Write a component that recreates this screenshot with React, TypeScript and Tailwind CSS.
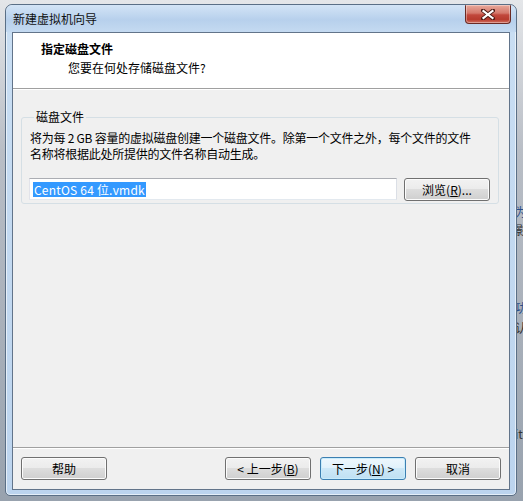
import React from "react";

function Btn({
  children,
  primary,
}: {
  children: React.ReactNode;
  primary?: boolean;
}) {
  return (
    <button
      className={
        primary
          ? "h-[23px] w-[86px] rounded-[3px] border border-[#3c7fb1] bg-[linear-gradient(to_bottom,#eef7fd_0%,#e0f1fb_49%,#cde8f7_50%,#bfe0f3_100%)] shadow-[inset_0_0_0_1px_#c8ecfc] flex items-center justify-center text-[12px] leading-[16px] text-black"
          : "h-[23px] w-[86px] rounded-[3px] border border-[#707070] bg-[linear-gradient(to_bottom,#f2f2f2_0%,#ebebeb_49%,#dddddd_50%,#cfcfcf_100%)] shadow-[inset_0_0_0_1px_#fcfcfc] flex items-center justify-center text-[12px] leading-[16px] text-black"
      }
    >
      {children}
    </button>
  );
}

export default function App() {
  return (
    <div className="relative w-[523px] h-[501px] overflow-hidden bg-[linear-gradient(to_bottom,#e4e6e9_0%,#b9bec6_30%,#98a2ae_100%)] font-['Noto_Sans_CJK_SC',sans-serif] text-black">
      {/* background desktop fragments on the right */}
      <div className="absolute left-[515px] top-[204px] text-[12px] leading-[16px] text-[#2b4f8a]">为</div>
      <div className="absolute left-[515px] top-[222px] text-[12px] leading-[16px] text-[#333]">影</div>
      <div className="absolute left-[515px] top-[300px] text-[12px] leading-[16px] text-[#2b4f8a]">功</div>
      <div className="absolute left-[515px] top-[320px] text-[12px] leading-[16px] text-[#333]">认</div>
      <div className="absolute left-[515px] top-[426px] text-[12px] leading-[16px] text-[#333]">ite</div>

      {/* window */}
      <div className="absolute left-[5px] top-[4px] w-[512px] h-[492px] rounded-t-[7px] rounded-b-[5px] border border-[#5a6f86] bg-[linear-gradient(to_bottom,#b9d1ea_0%,#c9def3_6%,#c4daf1_40%,#bcd4ee_100%)] shadow-[inset_0_0_0_1px_rgba(255,255,255,0.6)] flex flex-col">
        {/* title bar */}
        <div className="relative h-[27px] flex items-center pl-[7px] bg-[linear-gradient(to_bottom,#d3e4f6_0%,#b7d0ec_55%,#c4daf1_100%)] rounded-t-[7px]">
          <span className="text-[12px] leading-[16px] mt-[1px] text-[#101010]">新建虚拟机向导</span>
          <div className="absolute right-[5px] top-[0px] w-[46px] h-[19px] rounded-b-[4px] rounded-t-[1px] border border-[#6a2a24] border-t-0 bg-[linear-gradient(to_bottom,#e9a99b_0%,#d4786b_45%,#c1483c_55%,#b73b2e_80%,#d2705f_100%)] shadow-[inset_0_0_0_1px_rgba(255,255,255,0.35)] flex items-center justify-center">
            <svg width="14" height="11" viewBox="0 0 14 11">
              <path d="M2 1.5 L12 9.5 M12 1.5 L2 9.5" stroke="#4a1a14" strokeWidth="4" strokeLinecap="round" />
              <path d="M2.5 2 L11.5 9 M11.5 2 L2.5 9" stroke="#ffffff" strokeWidth="2.2" strokeLinecap="square" />
            </svg>
          </div>
        </div>

        {/* client area */}
        <div className="mx-[6px] flex-1 flex flex-col border border-[#62748a] bg-[#f0f0f0]">
          {/* header */}
          <div className="h-[56px] bg-white pt-[8px] border-b border-[#a0a0a0]">
            <div className="pl-[28px] text-[12px] leading-[16px] font-bold">指定磁盘文件</div>
            <div className="pl-[55px] mt-[3px] text-[12px] leading-[16px]">您要在何处存储磁盘文件?</div>
          </div>
          <div className="h-[1px] bg-white" />

          {/* body */}
          <div className="flex-1 px-[8px] pr-[10px]">
            <fieldset className="mt-[19px] border border-[#d5dfe5] rounded-[3px] pl-[7px] pr-[8px] pb-[2px]">
              <legend className="ml-[5px] px-[2px] text-[12px] leading-[16px]">磁盘文件</legend>
              <div className="pt-[5px] pl-[1px] text-[12px] leading-[16px] tracking-[-0.25px]">
                <div>将为每 2 GB 容量的虚拟磁盘创建一个磁盘文件。除第一个文件之外，每个文件的文件</div>
                <div>名称将根据此处所提供的文件名称自动生成。</div>
              </div>
              <div className="mt-[16px] flex items-start justify-between">
                <div className="w-[368px] h-[22px] border border-[#abadb3] border-r-[#dbdfe6] border-b-[#e3e9ef] border-l-[#e2e3ea] bg-white flex items-center pl-[3px]">
                  <span className="bg-[#3399ff] text-white text-[12px] leading-[15px] px-[1px] tracking-[0.2px]">CentOS 64 位.vmdk</span>
                </div>
                <Btn>
                  浏览(<span className="underline">R</span>)...
                </Btn>
              </div>
            </fieldset>
          </div>

          {/* footer */}
          <div className="border-t border-[#a0a0a0] shadow-[inset_0_1px_0_#ffffff] px-[8px] pt-[9px] pb-[9px] flex items-center">
            <Btn>帮助</Btn>
            <div className="flex-1" />
            <div className="flex gap-[9px]">
              <Btn>
                &lt; 上一步(<span className="underline">B</span>)
              </Btn>
              <Btn primary>
                下一步(<span className="underline">N</span>) &gt;
              </Btn>
              <Btn>取消</Btn>
            </div>
          </div>
        </div>
        <div className="h-[5px]" />
      </div>
    </div>
  );
}
